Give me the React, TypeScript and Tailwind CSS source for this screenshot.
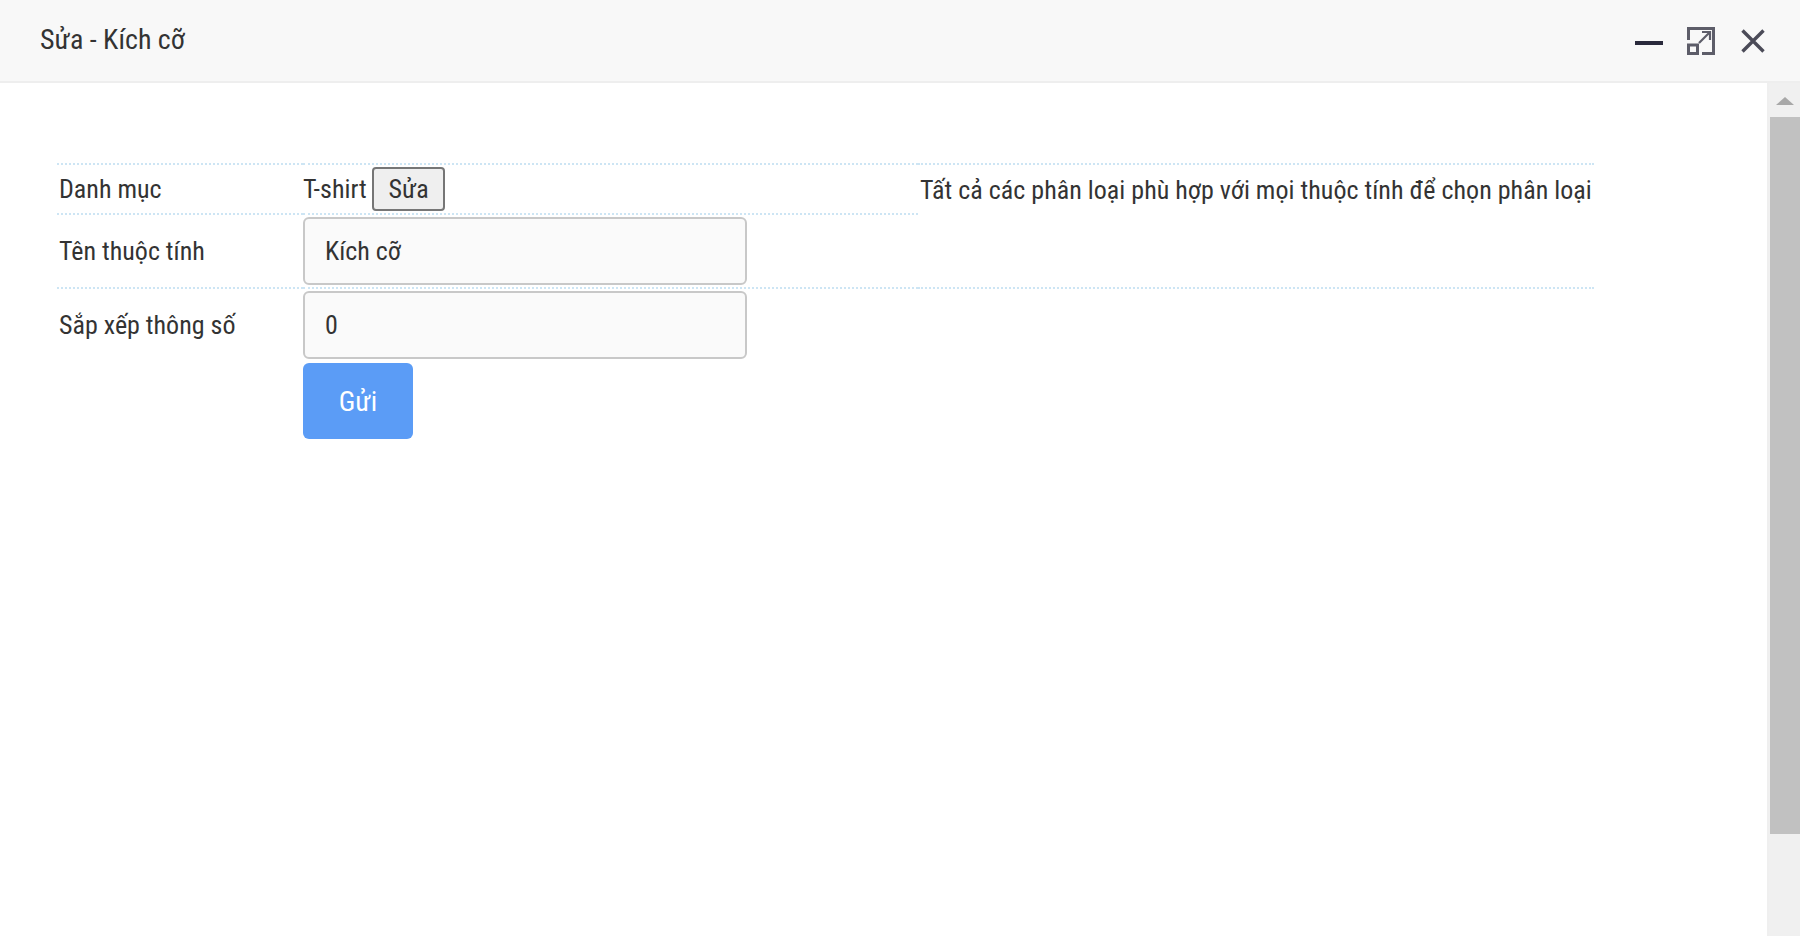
export default function App() {
  return (
    <div className="h-[936px] w-[1800px] overflow-hidden flex flex-col bg-white text-[#333] font-['Roboto',sans-serif] text-[26px] [font-stretch:75%]">
      <header className="h-[83px] shrink-0 bg-[#f8f8f8] border-b-2 border-[#eeeeee] flex items-center justify-between pl-[40px] pr-[35px]">
        <h1 className="text-[28px] font-normal text-[#333] mb-[2px]">Sửa - Kích cỡ</h1>
        <div className="flex items-center gap-[24px]">
          <svg width="28" height="28" viewBox="0 0 28 28">
            <rect x="0" y="14" width="28" height="4" fill="#2a2a3c" />
          </svg>
          <svg className="mr-[2px]" width="28" height="28" viewBox="0 0 28 28" fill="none" stroke="#5d5d69" strokeWidth="3">
            <path d="M1.5 13V1.5h25v25H15" />
            <rect x="1.5" y="18" width="9" height="8.5" />
            <path d="M12 16 23 5M15 5h8v8" strokeWidth="2.2" />
          </svg>
          <svg width="24" height="24" viewBox="0 0 24 24" fill="none" stroke="#4b4b58" strokeWidth="3.4">
            <path d="M1.5 1.5l21 21M22.5 1.5l-21 21" />
          </svg>
        </div>
      </header>

      <div className="flex flex-1 min-h-0">
        <main className="flex-1 pt-[80px] pl-[57px]">
          <table className="w-[1537px] border-collapse table-fixed">
            <colgroup>
              <col className="w-[246px]" />
              <col className="w-[615px]" />
              <col />
            </colgroup>
            <tbody>
              <tr className="border-t-2 border-dotted border-[#cde5f4]">
                <td className="h-[50px] pl-[2px] border-b-2 border-dotted border-[#cde5f4]">Danh mục</td>
                <td className="border-b-2 border-dotted border-[#cde5f4]">
                  <div className="flex items-center gap-[5px]">
                    <span>T-shirt</span>
                    <button className="w-[73px] h-[44px] pl-[1px] bg-[#efefef] border-2 border-[#767676] rounded-[4px]">Sửa</button>
                  </div>
                </td>
                <td rowSpan={2} className="align-top pl-[2px] pt-[6px] tracking-[0.02px] border-b-2 border-dotted border-[#cde5f4]">
                  Tất cả các phân loại phù hợp với mọi thuộc tính để chọn phân loại
                </td>
              </tr>
              <tr>
                <td className="h-[74px] pl-[2px] border-b-2 border-dotted border-[#cde5f4]">Tên thuộc tính</td>
                <td className="border-b-2 border-dotted border-[#cde5f4]">
                  <input
                    defaultValue="Kích cỡ"
                    className="block w-[444px] h-[68px] bg-[#fafafa] border-2 border-[#c8c8c8] rounded-[6px] pl-[20px] outline-none"
                  />
                </td>
              </tr>
              <tr>
                <td className="h-[75px] pl-[2px] pb-[1px]">Sắp xếp thông số</td>
                <td className="align-top pt-[2px]">
                  <input
                    defaultValue="0"
                    className="block w-[444px] h-[68px] bg-[#fafafa] border-2 border-[#c8c8c8] rounded-[6px] pl-[20px] outline-none"
                  />
                </td>
                <td />
              </tr>
              <tr>
                <td />
                <td>
                  <button className="w-[110px] h-[76px] pt-[2px] bg-[#5b9cf6] text-white text-[28px] rounded-[6px]">Gửi</button>
                </td>
                <td />
              </tr>
            </tbody>
          </table>
        </main>

        <div className="w-[33px] shrink-0 bg-[#f0f0f0] flex flex-col items-center border-l-2 border-[#efefef]">
          <div className="h-[34px] pt-[2px] flex items-center justify-center">
            <div className="w-0 h-0 border-l-[9px] border-r-[9px] border-b-[8px] border-l-transparent border-r-transparent border-b-[#a8a8a8]" />
          </div>
          <div className="w-[30px] h-[717px] bg-[#c1c1c1]" />
        </div>
      </div>
    </div>
  );
}
